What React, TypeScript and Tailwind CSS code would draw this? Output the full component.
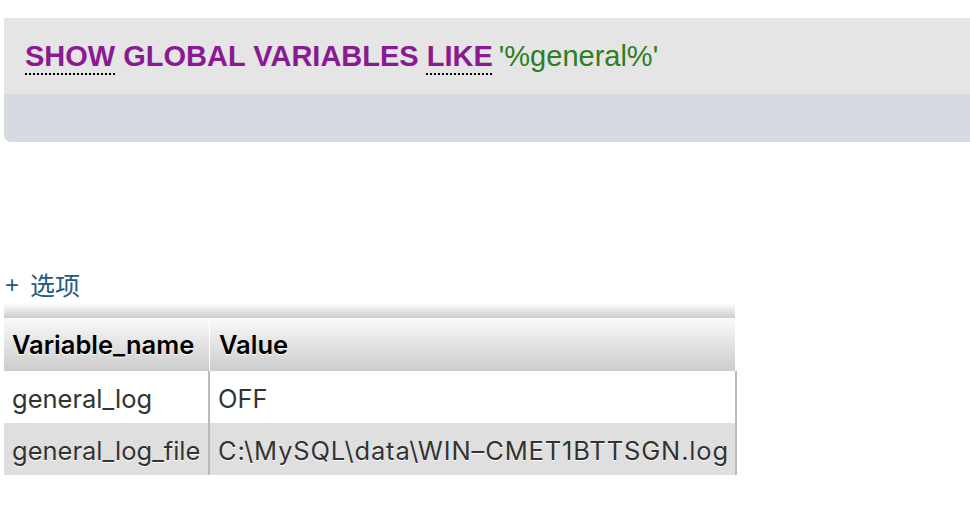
import React from "react";

export default function App() {
  const sans = { fontFamily: '"Liberation Sans", Arial, sans-serif' };
  const tbl = { fontFamily: 'Inter, "Liberation Sans", sans-serif' };
  return (
    <div className="w-[970px] h-[520px] bg-white overflow-hidden relative" style={sans}>
      <div className="pt-[18px] pl-[4px]">
        <div className="w-[1000px] rounded-bl-[7px] overflow-hidden">
          <div className="h-[76px] bg-[#e5e5e5] pl-[21px] flex items-center pt-[2px]">
            <span className="text-[29px] font-bold text-[#891a91] whitespace-nowrap">
              <span className="underline decoration-dotted decoration-black decoration-[2px] underline-offset-[7px]">SHOW</span>{" "}
              GLOBAL VARIABLES{" "}
              <span className="underline decoration-dotted decoration-black decoration-[2px] underline-offset-[7px]">LIKE</span>
            </span>
            <span className="text-[29px] text-[#2f7d22] ml-[6px] whitespace-nowrap">'%general%'</span>
          </div>
          <div className="h-[48px] bg-[#d5dbe1]" />
        </div>
      </div>

      <div className="mt-[128px] pl-[5px] h-[30px] flex items-center text-[#235a81]" style={{ fontFamily: '"Liberation Sans", "Noto Sans CJK SC", sans-serif' }}>
        <span className="text-[24px]">+</span>
        <span className="text-[25px] ml-[11px] -mt-[1px]" style={{ fontFamily: '"Noto Sans CJK SC", sans-serif' }}>选项</span>
      </div>

      <div className="ml-[4px] mt-[3px] w-[732px]" style={tbl}>
        <div className="h-[15px] w-[731px] bg-gradient-to-b from-white to-[#cccccc]" />
        <div className="flex w-[731px] h-[53px] bg-gradient-to-b from-[#fafafa] to-[#cccccc] text-[25.5px] font-semibold text-black [text-shadow:0_1px_0_#fff]">
          <div className="w-[206px] pl-[8px] pt-[1px] flex items-center border-r border-white">Variable_name</div>
          <div className="flex-1 pl-[9px] pt-[1px] flex items-center">Value</div>
        </div>
        <div className="text-[25.5px] text-[#333] [text-shadow:0_1px_0_#fff] border-r-2 border-[#bbbbbb] w-[733px]">
          <div className="flex h-[52px] bg-white">
            <div className="w-[206px] pl-[8px] pt-[4px] flex items-center border-r-2 border-[#bbbbbb]">general_log</div>
            <div className="flex-1 pl-[8px] pt-[4px] flex items-center">OFF</div>
          </div>
          <div className="flex h-[52px] bg-[#dfdfdf]">
            <div className="w-[206px] pl-[8px] pt-[4px] flex items-center border-r-2 border-[#bbbbbb] whitespace-nowrap">general_log_file</div>
            <div className="flex-1 pl-[8px] pt-[4px] flex items-center whitespace-nowrap tracking-[0.85px]">C:\MySQL\data\WIN–CMET1BTTSGN.log</div>
          </div>
        </div>
      </div>
    </div>
  );
}
